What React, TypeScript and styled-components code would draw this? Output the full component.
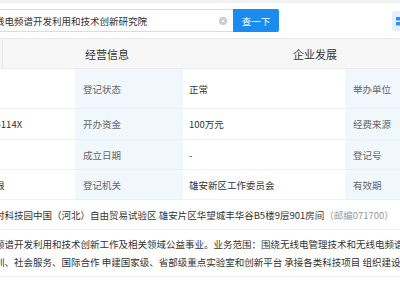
import React from 'react';
import styled, { createGlobalStyle } from 'styled-components';

const GlobalStyle = createGlobalStyle`
  body {
    margin: 0;
    background: #fff;
    font-family: 'Noto Sans CJK SC', 'Noto Sans', sans-serif;
  }
`;

// the screenshot is a cropped window onto a wider page
const Viewport = styled.div`
  width: 400px;
  height: 300px;
  overflow: hidden;
`;

const Page = styled.div`
  width: 840px;
  margin-left: -205px;
`;

const TopStrip = styled.div`
  height: 3px;
  background: #f2f2f2;
`;

const SearchBar = styled.div`
  height: 35px;
  display: flex;
  align-items: center;
  padding-left: 163px;
`;

const SearchBox = styled.div`
  box-sizing: border-box;
  width: 275px;
  height: 23px;
  display: flex;
  align-items: center;
  padding: 0 6px 0 7.5px;
  border: 1px solid #dcdcdc;
  border-right: none;
  border-radius: 2px 0 0 2px;
  font-size: 9.5px;
  color: #333;
  white-space: nowrap;
`;

const ClearIcon = styled.span`
  margin-left: auto;
  width: 8px;
  height: 8px;
  border-radius: 50%;
  background: #c9c9c9;
  display: flex;
  align-items: center;
  justify-content: center;
`;

const SearchButton = styled.button`
  width: 46px;
  height: 23px;
  border: none;
  border-radius: 0 2px 2px 0;
  background: #1a8cf0;
  color: #fff;
  font-family: inherit;
  font-size: 9.5px;
  padding: 0;
`;

const AppsButton = styled.div`
  margin-left: 113px;
  width: 20px;
  height: 20px;
  border-radius: 3px;
  background: #e4f0fc;
  display: flex;
  align-items: center;
  justify-content: center;
`;

const Tabs = styled.div`
  display: flex;
  height: 29px;
  background: #f7f7f7;
  border-top: 1px solid #e8e8e8;
  border-bottom: 1px solid #ececec;
`;

const Tab = styled.div<{ first?: boolean }>`
  width: 208px;
  display: flex;
  align-items: center;
  justify-content: center;
  font-size: 11px;
  color: #333;
  border-right: ${(p) => (p.first ? '1px solid #e6e6e6' : 'none')};
  box-sizing: border-box;
`;

const Table = styled.div`
  margin-left: 10px;
  width: 810px;
`;

const Row = styled.div<{ h: number }>`
  display: grid;
  grid-template-columns: 108px 162px 108px 162px 108px 162px;
  height: ${(p) => p.h}px;
  box-sizing: border-box;
  border-bottom: 1px solid #efefef;
`;

const Label = styled.div`
  background: #f0f7fd;
  color: #666;
  font-size: 9.5px;
  padding-left: 8px;
  display: flex;
  align-items: center;
  white-space: nowrap;
  overflow: hidden;
`;

const Value = styled.div<{ span?: number }>`
  grid-column: span ${(p) => p.span || 1};
  color: #333;
  font-size: 9.5px;
  line-height: 18px;
  padding-left: 6px;
  display: flex;
  flex-direction: column;
  justify-content: center;
  white-space: nowrap;
  overflow: hidden;
`;

const Muted = styled.span`
  color: #999;
`;

type Cell = [string, string];

const rows: { h: number; cells: Cell[] }[] = [
  { h: 40, cells: [['法定代表人', '王建'], ['登记状态', '正常'], ['举办单位', '雄安新区管理委员会']] },
  { h: 31, cells: [['统一社会信用代码', '521331000MJ0A84114X'], ['开办资金', '100万元'], ['经费来源', '非财政补助']] },
  { h: 30, cells: [['业务主管单位', '雄安新区'], ['成立日期', '-'], ['登记号', '-']] },
  { h: 30, cells: [['机构类型', '社会服务机构无期限'], ['登记机关', '雄安新区工作委员会'], ['有效期', '-']] },
];

const App: React.FC = () => {
  return (
    <>
      <GlobalStyle />
      <Viewport>
        <Page>
          <TopStrip />
          <SearchBar>
            <SearchBox>
              雄安无线电频谱开发利用和技术创新研究院
              <ClearIcon>
                <svg width="6" height="6" viewBox="0 0 6 6">
                  <path d="M1.5 1.5 L4.5 4.5 M4.5 1.5 L1.5 4.5" stroke="#fff" strokeWidth="0.9" />
                </svg>
              </ClearIcon>
            </SearchBox>
            <SearchButton>查一下</SearchButton>
            <AppsButton>
              <svg width="14" height="14" viewBox="0 0 14 14">
                <rect x="1" y="3" width="5" height="3.5" rx="0.5" fill="#2f8ef0" />
                <rect x="1" y="8" width="5" height="3.5" rx="0.5" fill="#2f8ef0" />
                <rect x="8" y="3" width="5" height="3.5" rx="0.5" fill="#2f8ef0" />
                <rect x="8" y="8" width="5" height="3.5" rx="0.5" fill="#2f8ef0" />
              </svg>
            </AppsButton>
          </SearchBar>
          <Tabs>
            <Tab first>基本信息</Tab>
            <Tab>经营信息</Tab>
            <Tab>企业发展</Tab>
            <Tab>知识产权</Tab>
          </Tabs>
          <Table>
            {rows.map((r, i) => (
              <Row key={i} h={r.h}>
                {r.cells.map(([k, v]) => (
                  <React.Fragment key={k}>
                    <Label>{k}</Label>
                    <Value>{v}</Value>
                  </React.Fragment>
                ))}
              </Row>
            ))}
            <Row h={30}>
              <Label>住所</Label>
              <Value span={5}>
                <span>
                  河北雄安新区东营村科技园中国（河北）自由贸易试验区 雄安片区华望城丰华谷B5楼9层901房间
                  <Muted>（邮编071700）</Muted>
                </span>
              </Value>
            </Row>
            <Row h={47}>
              <Label>业务范围</Label>
              <Value span={5}>
                <span>宗旨：开展无线电频谱开发利用和技术创新工作及相关领域公益事业。业务范围：围绕无线电管理技术和无线电频谱开发利用开展研究</span>
                <span>开展技术咨询、培训、社会服务、国际合作 申建国家级、省部级重点实验室和创新平台 承接各类科技项目 组织建设学术交流</span>
              </Value>
            </Row>
          </Table>
        </Page>
      </Viewport>
    </>
  );
};

export default App;
